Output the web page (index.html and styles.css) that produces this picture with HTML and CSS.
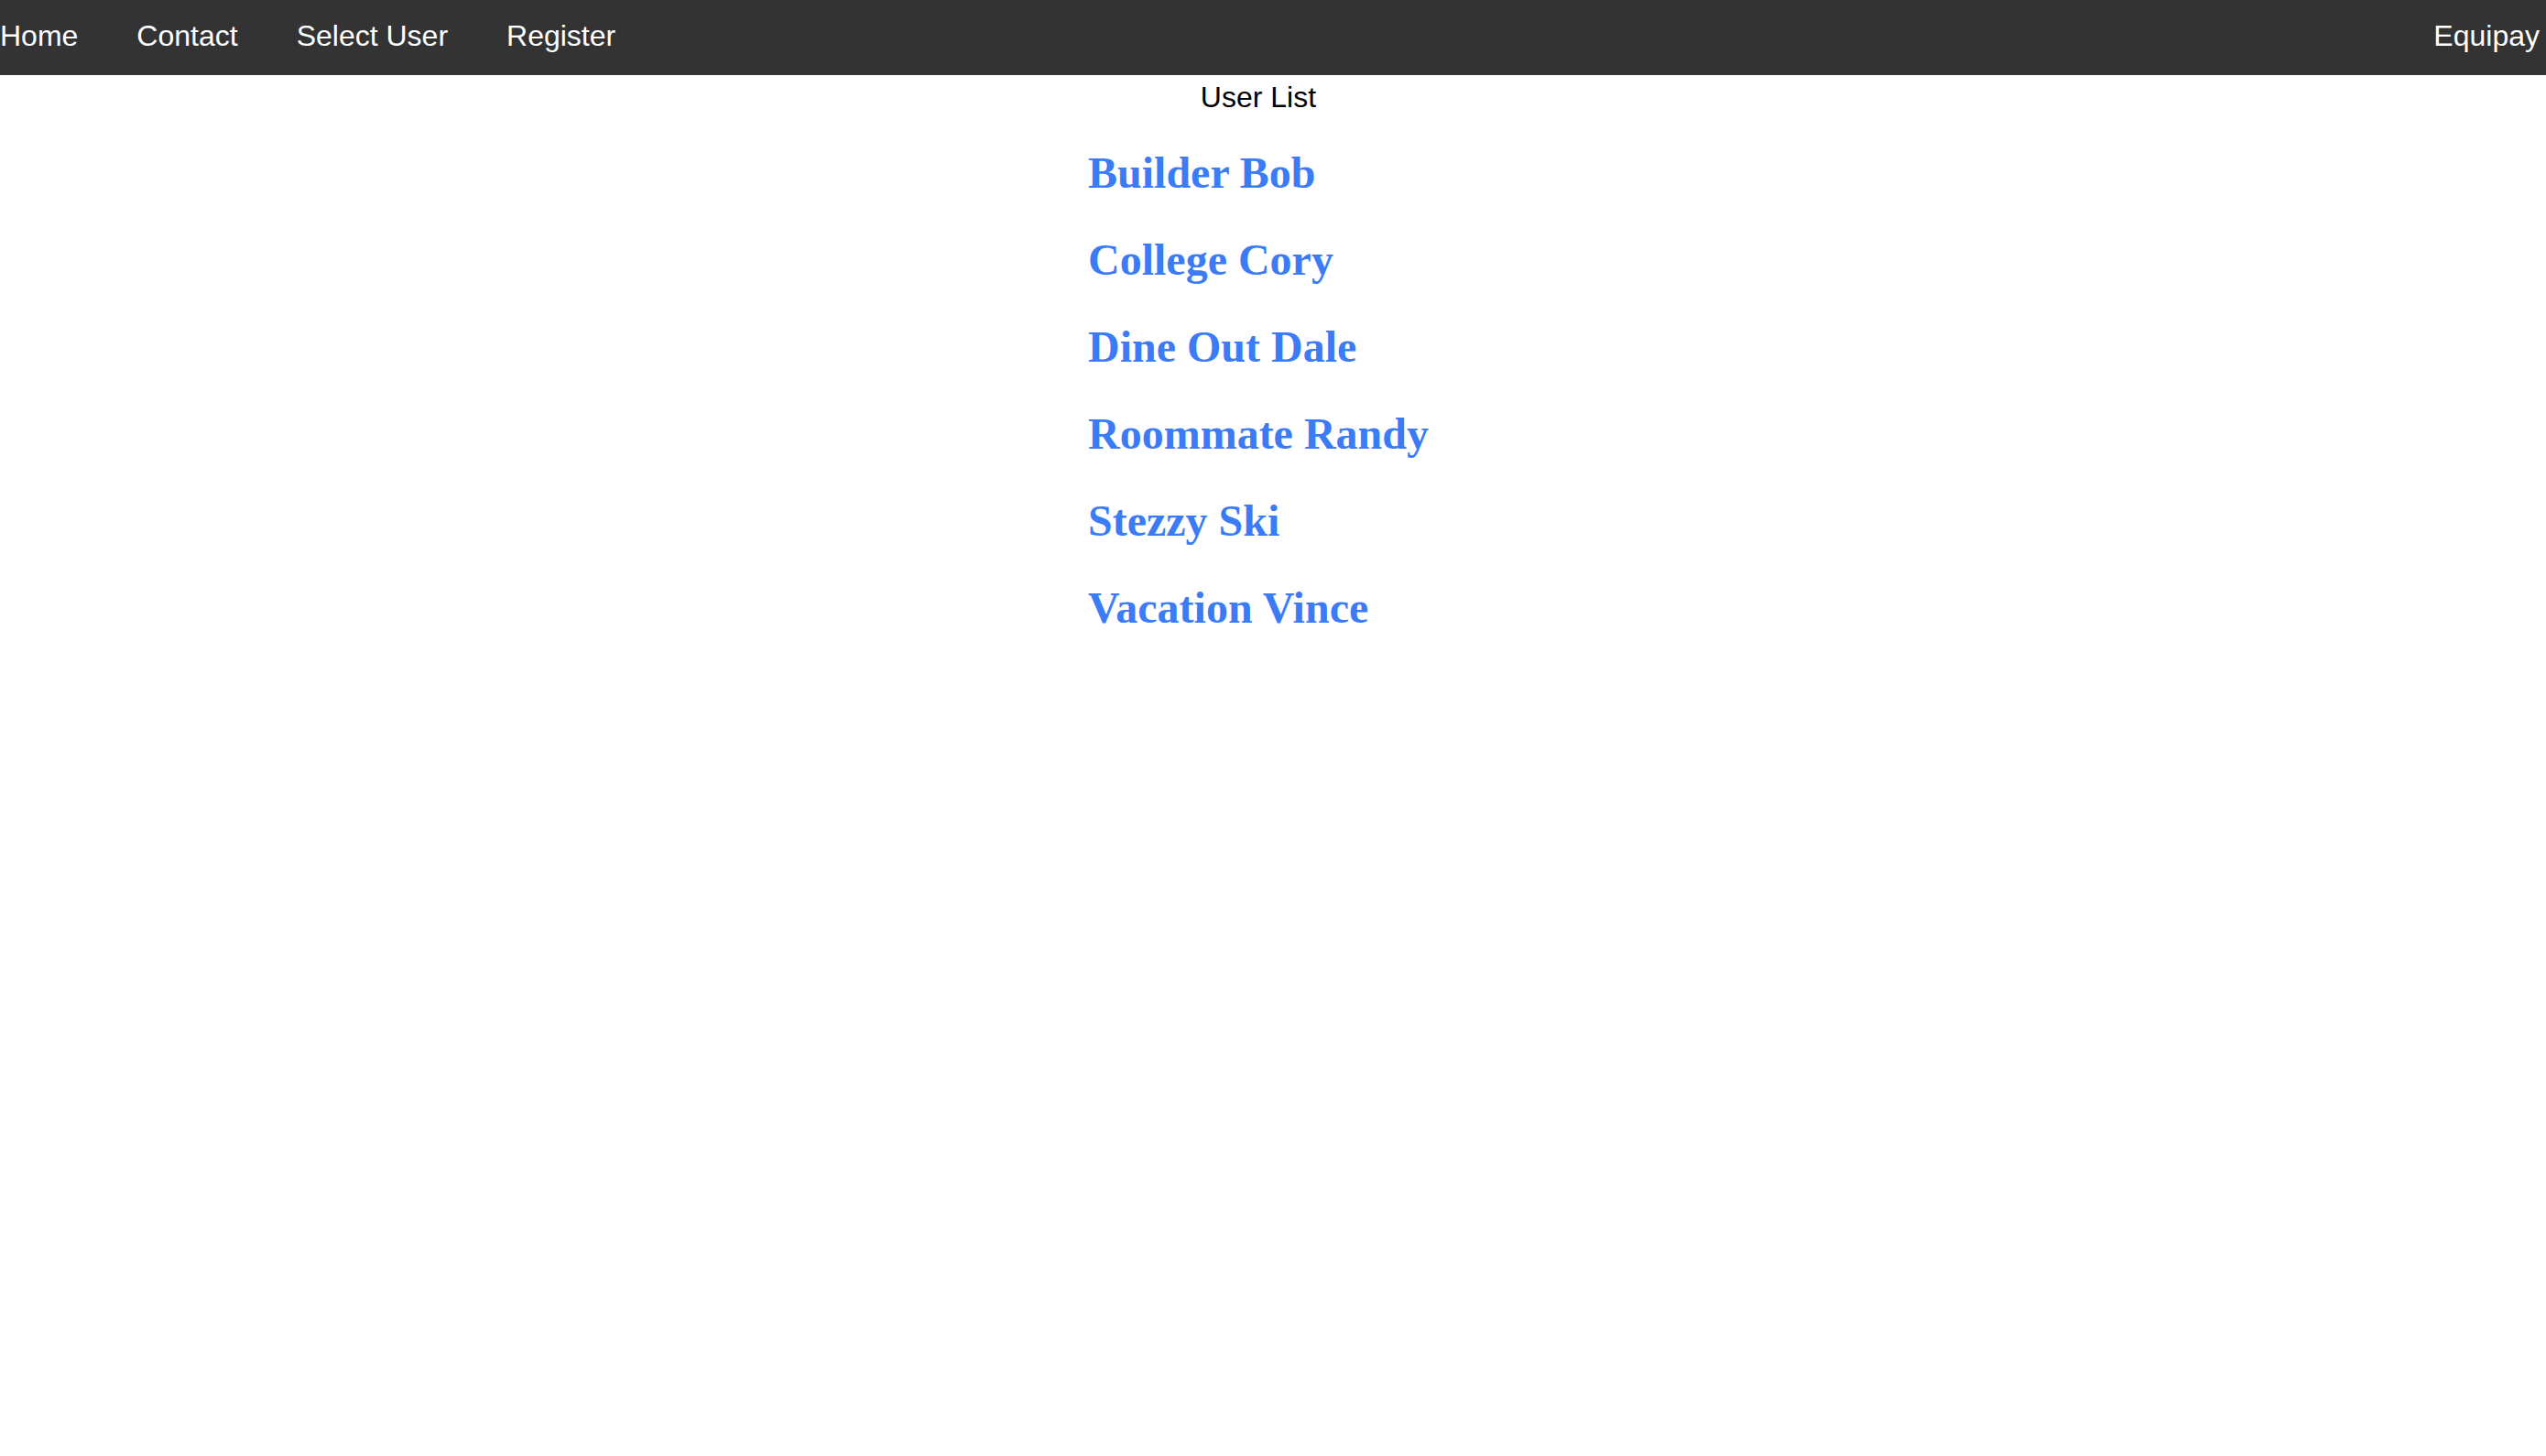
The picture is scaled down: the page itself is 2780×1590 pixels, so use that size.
FILE: index.html
```html
<!DOCTYPE html>
<html>
<head>
<meta charset="utf-8">
<title>Equipay</title>
<link rel="stylesheet" href="styles.css">
</head>
<body>
<nav class="topnav">
  <div class="nav-links">
    <a href="#">Home</a>
    <a href="#">Contact</a>
    <a href="#">Select User</a>
    <a href="#">Register</a>
  </div>
  <a class="brand" href="#">Equipay</a>
</nav>
<main class="content">
  <div class="panel">
    <div class="title">User List</div>
    <div class="users">
      <h2 class="user">Builder Bob</h2>
      <h2 class="user">College Cory</h2>
      <h2 class="user">Dine Out Dale</h2>
      <h2 class="user">Roommate Randy</h2>
      <h2 class="user">Stezzy Ski</h2>
      <h2 class="user">Vacation Vince</h2>
    </div>
  </div>
</main>
</body>
</html>
```
FILE: styles.css
```css
html, body {
  margin: 0;
  padding: 0;
  background: #ffffff;
}
body {
  font-family: "Liberation Sans", Arial, sans-serif;
  color: #000000;
}
.topnav {
  display: flex;
  justify-content: space-between;
  align-items: flex-start;
  height: 82px;
  background: #333333;
  box-sizing: border-box;
  padding: 21px 7px 0 0;
}
.nav-links {
  display: flex;
  gap: 64px;
}
.topnav a {
  color: #ffffff;
  text-decoration: none;
  font-size: 32px;
  line-height: 36px;
}
.content {
  display: flex;
  justify-content: center;
}
.panel {
  margin-right: 32px;
  width: max-content;
}
.title {
  text-align: center;
  font-size: 32px;
  line-height: 37px;
  margin-top: 6px;
}
.users {
  display: flex;
  flex-direction: column;
}
.user {
  font-family: "Liberation Serif", "Times New Roman", serif;
  font-weight: bold;
  font-size: 48px;
  line-height: 55px;
  color: #3b7cf6;
  margin: 0 0 40px 0;
}
.user:first-child {
  margin-top: 36px;
}
```
